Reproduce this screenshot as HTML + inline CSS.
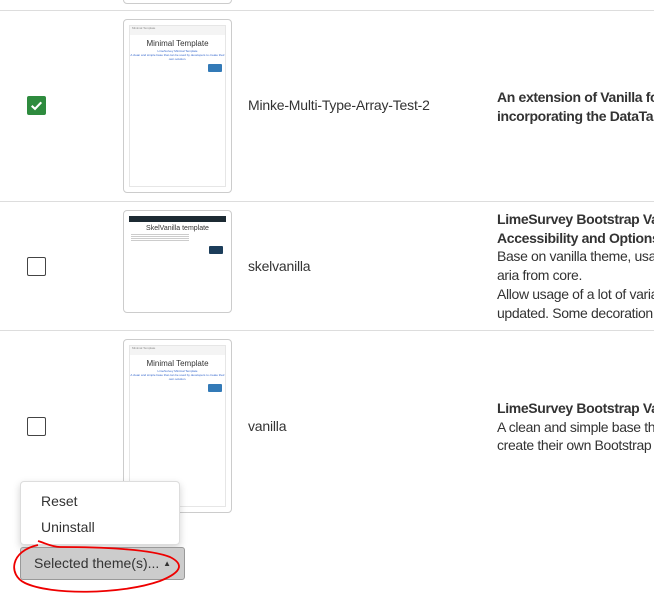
<!DOCTYPE html>
<html><head><style>
body{margin:0;width:654px;height:609px;overflow:hidden;background:#fff;font-family:"Liberation Sans",Arial,sans-serif;color:#333;position:relative}
.a{position:absolute}
.hr{position:absolute;left:0;width:654px;height:1px;background:#ddd}
.th{position:absolute;left:123px;width:107px;border:1px solid #ccc;border-radius:4px;background:#fff}
.in{position:absolute;left:5px;right:5px;top:5px;bottom:5px;border:1px solid #e6e6e6}
.cb{position:absolute;left:27px;width:17px;height:17px;border:1.5px solid #444;border-radius:2px;background:#fff}
.name{position:absolute;left:248px;font-size:14px;color:#333;letter-spacing:-0.2px}
.desc{position:absolute;left:497px;font-size:14px;line-height:18.7px;white-space:nowrap;color:#333;letter-spacing:-0.35px}
b{font-weight:bold}
.mt{font-size:8px;text-align:center;color:#333}
.tiny{font-size:3px;color:#36c;text-align:center}
.nx{position:absolute;right:3px;width:14px;height:8px;background:#337ab7;border-radius:1px}
</style></head><body>
<div class="th" style="top:-20px;height:22px"></div>
<div class="hr" style="top:10px"></div>
<div class="hr" style="top:201px"></div>
<div class="hr" style="top:330px"></div>

<div class="th" style="top:19px;height:172px"><div class="in">
<div style="height:9px;background:#f4f4f4;font-size:3px;color:#888;padding-left:2px">Minimal Template</div>
<div class="mt" style="margin-top:4px">Minimal Template</div>
<div class="tiny" style="margin-top:1px">LimeSurvey Minimal Template<br>A clean and simple base that can be used by developers to create their own solution.</div>
<div class="nx" style="top:38px"></div></div></div>
<div class="cb" style="top:96px;background:#2e8b3e;border-color:#2e8b3e"><svg width="17" height="17" viewBox="0 0 16 16" style="position:absolute;left:0;top:0"><path d="M3.5 8.3 L6.6 11.2 L12.5 5" stroke="#fff" stroke-width="2" fill="none"/></svg></div>
<div class="name" style="top:97px">Minke-Multi-Type-Array-Test-2</div>
<div class="desc" style="top:88px"><b>An extension of Vanilla fo</b><br><b>incorporating the DataTa</b></div>

<div class="th" style="top:210px;height:101px"><div class="in" style="border:none">
<div style="height:6px;background:#1c2a33"></div>
<div class="mt" style="margin-top:3px;font-size:7px">SkelVanilla template</div>
<div style="height:8px;margin:2px 2px 0;background:repeating-linear-gradient(#999 0 1px,#fff 1px 2px);opacity:.5;width:60%"></div>
<div class="nx" style="top:30px;background:#1c3d5a"></div></div></div>
<div class="cb" style="top:257px"></div>
<div class="name" style="top:258px">skelvanilla</div>
<div class="desc" style="top:210px"><b>LimeSurvey Bootstrap Va</b><br><b>Accessibility and Options</b><br>Base on vanilla theme, usag<br>aria from core.<br>Allow usage of a lot of varia<br>updated. Some decoration</div>

<div class="th" style="top:339px;height:172px"><div class="in">
<div style="height:9px;background:#f4f4f4;font-size:3px;color:#888;padding-left:2px">Minimal Template</div>
<div class="mt" style="margin-top:4px">Minimal Template</div>
<div class="tiny" style="margin-top:1px">LimeSurvey Minimal Template<br>A clean and simple base that can be used by developers to create their own solution.</div>
<div class="nx" style="top:38px"></div></div></div>
<div class="cb" style="top:417px"></div>
<div class="name" style="top:418px">vanilla</div>
<div class="desc" style="top:399px"><b>LimeSurvey Bootstrap Va</b><br>A clean and simple base th<br>create their own Bootstrap</div>

<div class="a" style="left:20px;top:481px;width:158px;height:62px;background:#fff;border:1px solid #ddd;border-radius:4px;box-shadow:0 3px 8px rgba(0,0,0,.18);font-size:14px">
<div class="a" style="left:20px;top:11px">Reset</div>
<div class="a" style="left:20px;top:37px">Uninstall</div></div>
<div class="a" style="left:20px;top:547px;width:165px;height:33px;background:#ccc;border:1px solid #999;border-radius:3px;box-sizing:border-box;font-size:14px;line-height:31px;padding-left:13px">Selected theme(s)... <span style="font-size:8px;vertical-align:2px">▲</span></div>
<svg class="a" style="left:0;top:535px" width="200" height="70"><path d="M38 10 C10 16 8 40 25 48 C50 60 120 60 160 46 C185 36 182 28 170 22 C150 14 100 12 60 12 C52 12 45 8 38 6" stroke="#e00" stroke-width="1.8" fill="none"/></svg>
</body></html>
